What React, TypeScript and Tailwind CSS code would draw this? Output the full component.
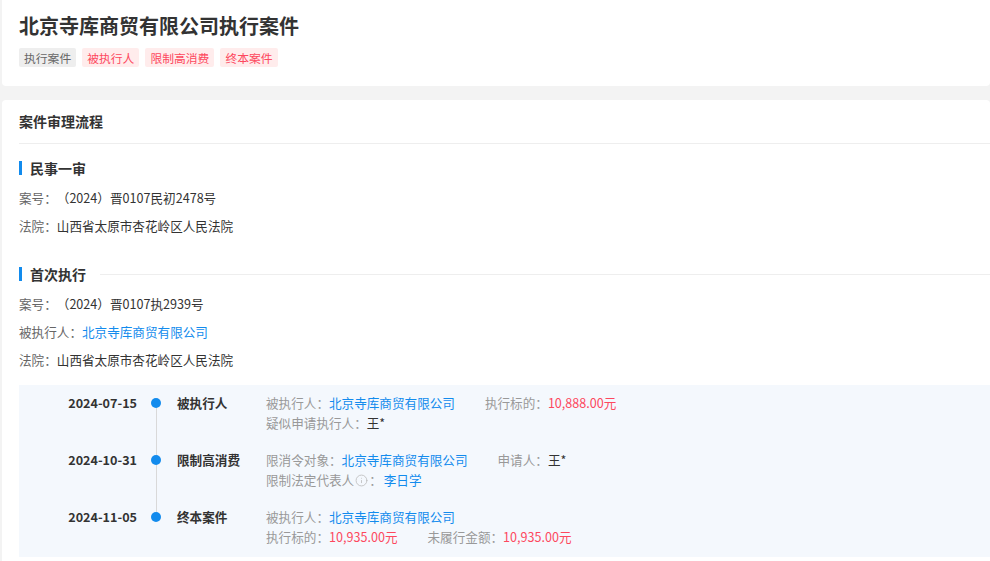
import { Info } from 'lucide-react'

const company = '北京寺库商贸有限公司'

type Part = { label: string; value: string; tone?: 'link' | 'red' | 'plain'; info?: boolean }

const timeline: { date: string; title: string; lines: Part[][] }[] = [
  {
    date: '2024-07-15',
    title: '被执行人',
    lines: [
      [
        { label: '被执行人', value: company, tone: 'link' },
        { label: '执行标的', value: '10,888.00元', tone: 'red' },
      ],
      [{ label: '疑似申请执行人', value: '王*' }],
    ],
  },
  {
    date: '2024-10-31',
    title: '限制高消费',
    lines: [
      [
        { label: '限消令对象', value: company, tone: 'link' },
        { label: '申请人', value: '王*' },
      ],
      [{ label: '限制法定代表人', value: '李日学', tone: 'link', info: true }],
    ],
  },
  {
    date: '2024-11-05',
    title: '终本案件',
    lines: [
      [{ label: '被执行人', value: company, tone: 'link' }],
      [
        { label: '执行标的', value: '10,935.00元', tone: 'red' },
        { label: '未履行金额', value: '10,935.00元', tone: 'red' },
      ],
    ],
  },
]

function SectionTitle({ children, line }: { children: string; line?: boolean }) {
  return (
    <div className="flex h-[20px] items-center">
      <span className="h-[14px] w-[3px] bg-[#128bed]" />
      <span className="ml-[8px] text-[14px] font-bold text-[#333]">{children}</span>
      {line && <span className="ml-[14px] h-px flex-1 bg-[#eeeeee]" />}
    </div>
  )
}

function InfoLine({ label, children }: { label: string; children: React.ReactNode }) {
  return (
    <div className="flex h-[20px] items-center text-[12.6px]">
      <span className="text-[#666]">{label}：</span>
      {children}
    </div>
  )
}

const toneClass = {
  link: 'text-[#128bed]',
  red: 'text-[#fd485e]',
  plain: 'text-[#333]',
}

export default function App() {
  return (
    <div
      className="min-h-[561px] bg-[#f3f3f3] pl-[2px]"
      style={{ fontFamily: '"Noto Sans CJK SC", "Noto Sans", sans-serif' }}
    >
      <div className="rounded-b-[4px] bg-white pb-[19px] pl-[17px] pt-[12px]">
        <h1 className="text-[20px] font-bold leading-[28px] text-[#333]">北京寺库商贸有限公司执行案件</h1>
        <div className="mt-[8px] flex gap-[6px] text-[11.8px] leading-[19px]">
          <span className="rounded-[2px] bg-[#eeeeee] px-[5px] text-[#666]">执行案件</span>
          <span className="rounded-[2px] bg-[#ffecec] px-[5px] text-[#fd485e]">被执行人</span>
          <span className="rounded-[2px] bg-[#ffecec] px-[5px] text-[#fd485e]">限制高消费</span>
          <span className="rounded-[2px] bg-[#ffecec] px-[5px] text-[#fd485e]">终本案件</span>
        </div>
      </div>

      <div className="mt-[14px] rounded-t-[4px] bg-white pb-[4px] pl-[17px]">
        <div className="flex h-[44px] items-center border-b border-[#eeeeee] text-[14px] font-bold text-[#333]">
          案件审理流程
        </div>

        <div className="mt-[14px]">
          <SectionTitle>民事一审</SectionTitle>
          <div className="mt-[10px] flex flex-col gap-[8px]">
            <InfoLine label="案号">
              <span className="text-[#333]">（2024）晋0107民初2478号</span>
            </InfoLine>
            <InfoLine label="法院">
              <span className="text-[#333]">山西省太原市杏花岭区人民法院</span>
            </InfoLine>
          </div>
        </div>

        <div className="mt-[28px]">
          <SectionTitle line>首次执行</SectionTitle>
          <div className="mt-[10px] flex flex-col gap-[8px]">
            <InfoLine label="案号">
              <span className="text-[#333]">（2024）晋0107执2939号</span>
            </InfoLine>
            <InfoLine label="被执行人">
              <span className="text-[#128bed]">{company}</span>
            </InfoLine>
            <InfoLine label="法院">
              <span className="text-[#333]">山西省太原市杏花岭区人民法院</span>
            </InfoLine>
          </div>
        </div>

        <div className="relative mt-[15px] flex flex-col gap-[17px] bg-[#f4f8fd] pb-[10px] pt-[8px]">
          <span className="absolute bottom-[40px] left-[137px] top-[18px] w-px bg-[#d9d9d9]" />
          {timeline.map((row) => (
            <div key={row.date} className="relative flex text-[12.6px] leading-[20px]">
              <div className="w-[118px] text-right font-bold text-[#333]">{row.date}</div>
              <div className="flex w-[38px] justify-center pt-[5px]">
                <span className="h-[10px] w-[10px] rounded-full bg-[#128bed]" />
              </div>
              <div className="ml-[2px] w-[89px] font-bold text-[#333]">{row.title}</div>
              <div className="flex flex-col">
                {row.lines.map((parts, i) => (
                  <div key={i} className="flex">
                    {parts.map((p) => (
                      <span key={p.label} className="mr-[30px] flex items-center">
                        <span className="text-[#999]">{p.label}</span>
                        {p.info && <Info size={13} strokeWidth={1.5} className="mx-[1px] text-[#bbbbbb]" />}
                        <span className="text-[#999]">：</span>
                        {p.info && <span className="w-[2px]" />}
                        <span className={toneClass[p.tone ?? 'plain']}>{p.value}</span>
                      </span>
                    ))}
                  </div>
                ))}
              </div>
            </div>
          ))}
        </div>
      </div>
    </div>
  )
}
